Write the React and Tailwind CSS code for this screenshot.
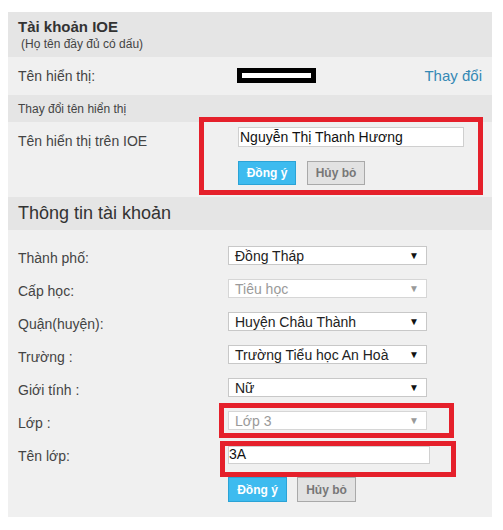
import React from "react";

const font = { fontFamily: '"Liberation Sans", Arial, sans-serif' };

function Select({ value, disabled }) {
  return (
    <div
      className={`flex h-[19px] w-[199px] items-center justify-between border bg-white pl-[6px] pr-[7px] text-[14px] leading-none ${
        disabled ? "border-[#d6d6d6] text-[#9a9a9a]" : "border-[#c8c8c8] text-[#222]"
      }`}
    >
      <span>{value}</span>
      <span className={`text-[10px] ${disabled ? "text-[#999]" : "text-[#111]"}`}>▼</span>
    </div>
  );
}

function Row({ label, children }) {
  return (
    <div className="flex h-[19px] items-center">
      <div className="w-[210px] pt-[5px] text-[14px] text-[#444]">{label}</div>
      {children}
    </div>
  );
}

function Buttons() {
  return (
    <div className="flex gap-[10px]">
      <button className="h-[25px] w-[59px] border border-[#2ba3d6] bg-[#3dbbef] text-[12px] font-bold text-white">
        Đồng ý
      </button>
      <button className="h-[25px] w-[59px] border border-[#a9a9a9] bg-[#e2e2e2] text-[12px] font-bold text-[#777]">
        Hủy bỏ
      </button>
    </div>
  );
}

export default function App() {
  return (
    <div className="min-h-[530px] bg-white pl-[8px] pt-[12px]" style={font}>
      <div className="relative w-[484px] bg-[#f0f0f0]">
        {/* header */}
        <div className="h-[45px] bg-[#e5e5e5] pl-[10px] pt-[6px]">
          <div className="text-[15px] font-bold leading-[18px] text-[#333]">Tài khoản IOE</div>
          <div className="pl-[3px] text-[12px] leading-[16px] text-[#444]">(Họ tên đầy đủ có dấu)</div>
        </div>
        {/* display name row */}
        <div className="flex h-[38px] items-center pl-[10px] pr-[10px]">
          <div className="w-[219px] pt-[1px] text-[14px] text-[#444]">Tên hiển thị:</div>
          <div className="mb-[2px] h-[15px] w-[79px] border-[5px] border-black bg-white" />
          <div className="ml-auto text-[15px] text-[#3589b5]">Thay đổi</div>
        </div>
        {/* sub header */}
        <div className="flex h-[27px] items-center bg-[#e5e5e5] pl-[10px] text-[12px] text-[#444]">
          Thay đổi tên hiển thị
        </div>
        {/* edit row */}
        <div className="flex h-[75px] pl-[10px] pt-[5px]">
          <div className="w-[220px] pt-[4px] text-[14px] text-[#444]">Tên hiển thị trên IOE</div>
          <div className="flex flex-col gap-[14px]">
            <div className="flex h-[20px] w-[226px] items-center border border-[#cfcfcf] bg-white pl-[1px] text-[14px] text-[#111]">
              Nguyễn Thị Thanh Hương
            </div>
            <div className="flex gap-[11px]">
              <button className="h-[24px] w-[58px] border border-[#2ba3d6] bg-[#3dbbef] text-[12px] font-bold text-white">
                Đồng ý
              </button>
              <button className="h-[24px] w-[58px] border border-[#a9a9a9] bg-[#e2e2e2] text-[12px] font-bold text-[#777]">
                Hủy bỏ
              </button>
            </div>
          </div>
        </div>
        {/* section header */}
        <div className="flex h-[33px] items-center bg-[#e5e5e5] pl-[10px] text-[18px] text-[#333]">
          Thông tin tài khoản
        </div>
        {/* form */}
        <div className="flex flex-col gap-[14px] pb-[15px] pl-[10px] pt-[16px]">
          <Row label="Thành phố:">
            <Select value="Đồng Tháp" />
          </Row>
          <Row label="Cấp học:">
            <Select value="Tiêu học" disabled />
          </Row>
          <Row label="Quận(huyện):">
            <Select value="Huyện Châu Thành" />
          </Row>
          <Row label="Trường :">
            <Select value="Trường Tiểu học An Hoà" />
          </Row>
          <Row label="Giới tính :">
            <Select value="Nữ" />
          </Row>
          <Row label="Lớp :">
            <Select value="Lớp 3" disabled />
          </Row>
          <Row label="Tên lớp:">
            <div className="mt-[2px] flex h-[18px] w-[202px] items-center border border-[#d0d0d0] bg-white text-[14px] text-[#111]">
              3A
            </div>
          </Row>
          <div className="flex">
            <div className="w-[210px]" />
            <Buttons />
          </div>
        </div>

        {/* red annotation boxes */}
        <div className="pointer-events-none absolute left-[191px] top-[105px] h-[78px] w-[284px] border-[5px] border-[#e5202b]" />
        <div className="pointer-events-none absolute left-[211px] top-[391px] h-[35px] w-[235px] border-[5px] border-[#e5202b]" />
        <div className="pointer-events-none absolute left-[212px] top-[429px] h-[36px] w-[236px] border-[5px] border-[#e5202b]" />
      </div>
    </div>
  );
}
